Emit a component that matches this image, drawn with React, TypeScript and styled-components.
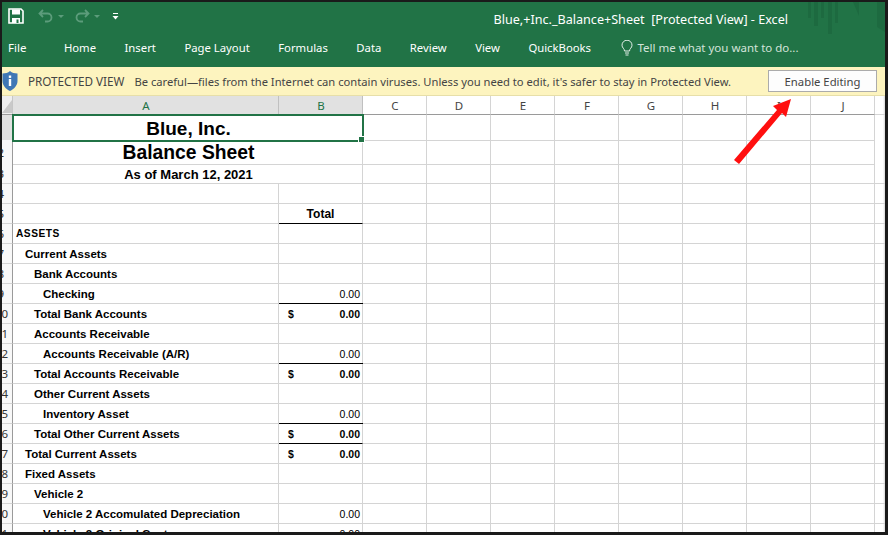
import styled, { createGlobalStyle } from "styled-components";

const GlobalStyle = createGlobalStyle`
  html, body {
    margin: 0;
    padding: 0;
    background: #fff;
  }
`;

type Row = {
  n: number;
  label?: string;
  indent?: number;
  amount?: string;
  dollar?: boolean;
  boldAmount?: boolean;
  lineTop?: boolean;
  lineBottom?: boolean;
  head?: string;
  spaced?: boolean;
};

const rows: Row[] = [
  { n: 4 },
  { n: 5, head: "Total", lineBottom: true },
  { n: 6, label: "ASSETS", indent: 0, spaced: true },
  { n: 7, label: "Current Assets", indent: 1 },
  { n: 8, label: "Bank Accounts", indent: 2 },
  { n: 9, label: "Checking", indent: 3, amount: "0.00" },
  { n: 10, label: "Total Bank Accounts", indent: 2, amount: "0.00", dollar: true, boldAmount: true, lineTop: true },
  { n: 11, label: "Accounts Receivable", indent: 2 },
  { n: 12, label: "Accounts Receivable (A/R)", indent: 3, amount: "0.00" },
  { n: 13, label: "Total Accounts Receivable", indent: 2, amount: "0.00", dollar: true, boldAmount: true, lineTop: true },
  { n: 14, label: "Other Current Assets", indent: 2 },
  { n: 15, label: "Inventory Asset", indent: 3, amount: "0.00" },
  { n: 16, label: "Total Other Current Assets", indent: 2, amount: "0.00", dollar: true, boldAmount: true, lineTop: true, lineBottom: true },
  { n: 17, label: "Total Current Assets", indent: 1, amount: "0.00", dollar: true, boldAmount: true },
  { n: 18, label: "Fixed Assets", indent: 1 },
  { n: 19, label: "Vehicle 2", indent: 2 },
  { n: 20, label: "Vehicle 2 Accomulated Depreciation", indent: 3, amount: "0.00" },
  { n: 21, label: "Vehicle 2 Original Cost", indent: 3, amount: "0.00" },
];

const emptyCols = ["C", "D", "E", "F", "G", "H", "I", "J"];
const tabs = ["Home", "Insert", "Page Layout", "Formulas", "Data", "Review", "View", "QuickBooks"];

function EmptyCells() {
  return (
    <>
      {emptyCols.map((c) => (
        <Cell key={c} />
      ))}
      <Filler />
    </>
  );
}

export default function App() {
  return (
    <Frame>
      <GlobalStyle />
      <TitleBar>
        <QuickAccess>
          <svg width="16" height="16" viewBox="0 0 16 16">
            <path d="M1 1h12l2 2v12H1z" fill="none" stroke="#fff" strokeWidth="1.6" />
            <rect x="4" y="1.500" width="8" height="5" fill="#fff" />
            <rect x="4" y="10" width="8" height="5" fill="#fff" />
            <rect x="8.500" y="11.500" width="2" height="3.500" fill="#217346" />
          </svg>
          <FadedIcon width="16" height="14" viewBox="0 0 16 14" $left={14}>
            <path d="M5 1 1.500 4.500 5 8M2 4.500h7.500a4 4 0 0 1 0 8H7" fill="none" stroke="#5c9c7b" strokeWidth="1.800" />
          </FadedIcon>
          <FadedCaret $left={4} />
          <FadedIcon width="16" height="14" viewBox="0 0 16 14" $left={10}>
            <path d="M11 1l3.500 3.500L11 8M14 4.500H6.500a4 4 0 0 0 0 8H9" fill="none" stroke="#5c9c7b" strokeWidth="1.800" />
          </FadedIcon>
          <FadedCaret $left={4} />
          <QatMenu width="7" height="7" viewBox="0 0 7 7">
            <rect x="1" y="0" width="5" height="1" fill="#fff" />
            <path d="M0.500 3h6L3.500 6.500z" fill="#fff" />
          </QatMenu>
        </QuickAccess>
        <WindowTitle>Blue,+Inc._Balance+Sheet&nbsp; [Protected View] - Excel</WindowTitle>
        <Circuit width="80" height="34" viewBox="0 0 80 34">
          <g fill="#1d6a40">
            <rect x="3" y="0" width="3" height="16" />
            <rect x="9" y="0" width="4" height="24" />
            <rect x="16" y="0" width="3" height="16" />
            <rect x="23" y="0" width="4" height="32" />
            <rect x="30" y="0" width="3" height="21" />
            <path d="M48 0h6v14zM62 0h18v30l-8-5V0z" />
          </g>
        </Circuit>
      </TitleBar>

      <RibbonTabs>
        <FileTab>File</FileTab>
        {tabs.map((t) => (
          <Tab key={t}>{t}</Tab>
        ))}
        <TellMe>
          <svg width="12" height="16" viewBox="0 0 12 16">
            <path
              d="M3.500 11C3.500 8.500 1 8 1 5.200a5 5 0 0 1 10 0C11 8 8.500 8.500 8.500 11zM4 13h4M4.500 15h3"
              fill="none"
              stroke="#e4efe9"
              strokeWidth="1"
            />
          </svg>
          Tell me what you want to do...
        </TellMe>
      </RibbonTabs>

      <Banner>
        <svg width="16" height="20" viewBox="0 0 16 20">
          <path d="M8 0c2 1.800 4.500 2.500 7.500 2.500V10c0 4.500-3.500 8-7.500 10C4 18 .5 14.500.5 10V2.500C3.500 2.500 6 1.800 8 0z" fill="#3f77b5" />
          <rect x="6.800" y="8" width="2.400" height="7" fill="#fff" />
          <rect x="6.800" y="4.500" width="2.400" height="2.400" fill="#fff" />
        </svg>
        <BannerTitle>PROTECTED VIEW</BannerTitle>
        <BannerText>Be careful—files from the Internet can contain viruses. Unless you need to edit, it's safer to stay in Protected View.</BannerText>
        <EnableButton>Enable Editing</EnableButton>
      </Banner>

      <Sheet>
        <SheetRow $height={19}>
          <Corner>
            <svg width="11" height="19" viewBox="0 0 11 19">
              <path d="M10 4v13H0z" fill="#c9c9c9" />
            </svg>
          </Corner>
          <ColHead $selected>A</ColHead>
          <ColHead $selected>B</ColHead>
          {emptyCols.map((c) => (
            <ColHead key={c}>{c}</ColHead>
          ))}
          <Filler />
        </SheetRow>

        <SheetRow $height={25}>
          <RowHead $selected />
          <TitleCell $size={19} $active>
            Blue, Inc.
            <FillHandle />
          </TitleCell>
          <EmptyCells />
        </SheetRow>
        <SheetRow $height={24}>
          <RowHead $digits={1}>2</RowHead>
          <TitleCell $size={19.300}>Balance Sheet</TitleCell>
          <EmptyCells />
        </SheetRow>
        <SheetRow $height={20}>
          <RowHead $digits={1}>3</RowHead>
          <TitleCell $size={13}>As of March 12, 2021</TitleCell>
          <EmptyCells />
        </SheetRow>

        {rows.map((r) => (
          <SheetRow key={r.n} $height={20}>
            <RowHead $digits={r.n < 10 ? 1 : 2}>{r.n}</RowHead>
            <LabelCell $indent={r.indent ?? 0} $spaced={r.spaced}>
              {r.label}
            </LabelCell>
            <AmountCell $lineTop={r.lineTop} $lineBottom={r.lineBottom} $bold={r.boldAmount} $center={!!r.head}>
              {r.dollar && <Dollar>$</Dollar>}
              {r.head ?? r.amount}
            </AmountCell>
            <EmptyCells />
          </SheetRow>
        ))}

        <Arrow width="70" height="80" viewBox="0 0 70 80">
          <path d="M2 70 45 20 41 16 59 9 54 27 50 23 7 74Z" fill="#ff0f0f" />
        </Arrow>
      </Sheet>
    </Frame>
  );
}

const Frame = styled.div`
  position: relative;
  box-sizing: border-box;
  width: 888px;
  height: 535px;
  overflow: hidden;
  border: 2px solid #1a1a1a;
  border-right-width: 3px;
  border-bottom-width: 3px;
  background: #fff;
  font-family: "Noto Sans", "Liberation Sans", sans-serif;
`;

const TitleBar = styled.div`
  position: relative;
  display: flex;
  align-items: center;
  height: 31px;
  padding: 0 6px;
  background: #217346;
  color: #fff;
`;

const QuickAccess = styled.div`
  display: flex;
  align-items: center;
  margin-top: -3px;
`;

const FadedIcon = styled.svg<{ $left: number }>`
  margin-left: ${(p) => p.$left}px;
`;

const FadedCaret = styled.span<{ $left: number }>`
  width: 0;
  height: 0;
  margin-left: ${(p) => p.$left}px;
  border-left: 3px solid transparent;
  border-right: 3px solid transparent;
  border-top: 3px solid #5c9c7b;
`;

const QatMenu = styled.svg`
  margin-left: 12px;
`;

const WindowTitle = styled.div`
  margin-left: auto;
  margin-top: 4px;
  margin-right: 91px;
  font-size: 12.600px;
  white-space: nowrap;
`;

const Circuit = styled.svg`
  position: absolute;
  top: 0;
  right: 0;
`;

const RibbonTabs = styled.div`
  display: flex;
  align-items: center;
  gap: 28.500px;
  height: 34px;
  padding-left: 6px;
  background: #217346;
  color: #fff;
  font-size: 11.300px;
`;

const Tab = styled.span`
  white-space: nowrap;
  margin-top: -5px;
`;

const FileTab = styled(Tab)`
  margin-right: 9px;
  font-size: 11.500px;
`;

const TellMe = styled.span`
  display: flex;
  align-items: center;
  gap: 5px;
  margin-top: -5px;
  margin-left: 1px;
  color: #d3e3da;
  font-size: 11.500px;
  white-space: nowrap;
`;

const Banner = styled.div`
  display: flex;
  align-items: center;
  box-sizing: border-box;
  height: 29px;
  padding: 0 8px 0 0;
  background: #fdf4bf;
  border-bottom: 1px solid #e7dfa9;
  color: #444;
`;

const BannerTitle = styled.span`
  margin-left: 10px;
  font-size: 11.700px;
  white-space: nowrap;
`;

const BannerText = styled.span`
  margin-left: 10px;
  font-size: 11.200px;
  white-space: nowrap;
`;

const EnableButton = styled.button`
  box-sizing: border-box;
  width: 109px;
  height: 22px;
  margin-left: auto;
  background: #fdfdfd;
  border: 1px solid #ababab;
  color: #444;
  font: inherit;
  font-size: 11.300px;
  padding: 0;
`;

const Sheet = styled.div`
  position: relative;
  font-family: "Liberation Sans", Arial, sans-serif;
  color: #000;
`;

const SheetRow = styled.div<{ $height: number }>`
  display: grid;
  grid-template-columns: 11px 266px 84px repeat(8, 64px) 1fr;
  height: ${(p) => p.$height}px;

  & > * {
    box-sizing: border-box;
    min-width: 0;
  }
`;

const Corner = styled.div`
  background: #efefef;
  border-right: 1px solid #c6c6c6;
  border-bottom: 1px solid #9a9a9a;
  overflow: hidden;
`;

const ColHead = styled.div<{ $selected?: boolean }>`
  display: flex;
  align-items: center;
  justify-content: center;
  padding-left: 1px;
  background: ${(p) => (p.$selected ? "#e1e1e1" : "#fff")};
  border-right: 1px solid ${(p) => (p.$selected ? "#c0c0c0" : "#d4d4d4")};
  border-bottom: 1px solid ${(p) => (p.$selected ? "#217346" : "#9a9a9a")};
  color: ${(p) => (p.$selected ? "#217346" : "#444")};
  font-family: "Noto Sans", sans-serif;
  font-size: 11.500px;
`;

const RowHead = styled.div<{ $selected?: boolean; $digits?: number }>`
  display: flex;
  align-items: center;
  justify-content: flex-end;
  overflow: hidden;
  padding-right: ${(p) => (p.$digits === 1 ? 8 : 4)}px;
  background: ${(p) => (p.$selected ? "#e1e1e1" : "#f8f8f8")};
  border-right: 1px solid #9a9a9a;
  border-bottom: 1px solid #d4d4d4;
  color: #333;
  font-family: "Noto Sans", sans-serif;
  font-size: 11.500px;
`;

const Cell = styled.div`
  border-right: 1px solid #d4d4d4;
  border-bottom: 1px solid #d4d4d4;
`;

const Filler = styled.div`
  border-bottom: 1px solid #d4d4d4;
  background: linear-gradient(to right, #fff 8px, #d8d8d8);
`;

const TitleCell = styled(Cell)<{ $size: number; $active?: boolean }>`
  position: relative;
  grid-column: span 2;
  display: flex;
  align-items: center;
  justify-content: center;
  padding: ${(p) => (p.$active ? 3 : 2)}px 0 0 2px;
  font-size: ${(p) => p.$size}px;
  font-weight: 700;
  ${(p) => p.$active && "outline: 2px solid #217346; outline-offset: -1px; z-index: 1;"}
`;

const FillHandle = styled.span`
  position: absolute;
  right: -3px;
  bottom: -3px;
  box-sizing: border-box;
  width: 7px;
  height: 7px;
  background: #217346;
  border: 1px solid #fff;
`;

const LabelCell = styled(Cell)<{ $indent: number; $spaced?: boolean }>`
  display: flex;
  align-items: center;
  padding-left: ${(p) => 3 + p.$indent * 9}px;
  font-size: 11.500px;
  font-weight: 700;
  white-space: nowrap;
  ${(p) => p.$spaced && "letter-spacing: 0.5px; font-size: 10.200px;"}
`;

const AmountCell = styled(Cell)<{
  $lineTop?: boolean;
  $lineBottom?: boolean;
  $bold?: boolean;
  $center?: boolean;
}>`
  position: relative;
  display: flex;
  align-items: center;
  justify-content: ${(p) => (p.$center ? "center" : "flex-end")};
  padding-right: ${(p) => (p.$center ? 0 : 2)}px;
  font-size: ${(p) => (p.$center ? 12 : 10.500)}px;
  font-weight: ${(p) => (p.$bold || p.$center ? 700 : 400)};
  ${(p) => p.$lineTop && "box-shadow: 0 -1px 0 #000;"}
  ${(p) => p.$lineBottom && "border-bottom-color: #000;"}
`;

const Dollar = styled.span`
  position: absolute;
  left: 9px;
`;

const Arrow = styled.svg`
  position: absolute;
  top: -6px;
  left: 730px;
`;
